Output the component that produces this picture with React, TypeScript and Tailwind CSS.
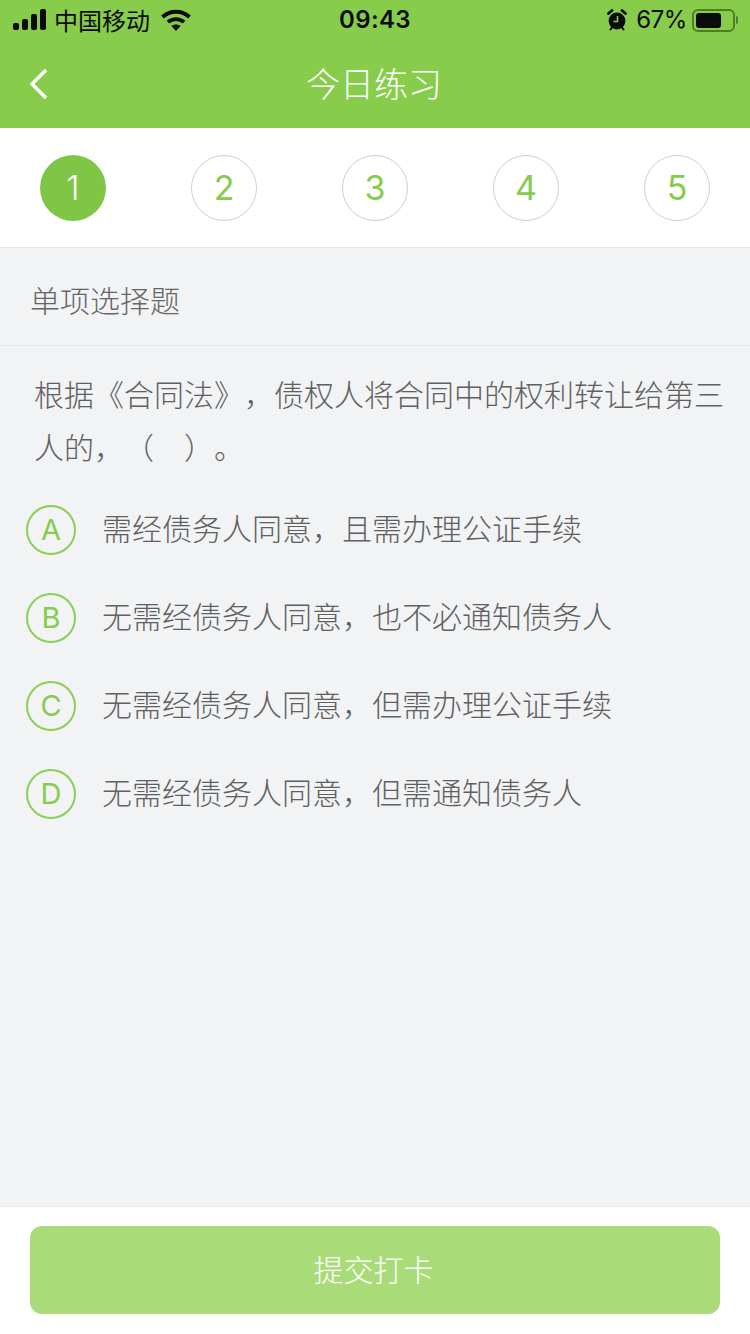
const FONT = "font-['Noto_Sans_CJK_SC','Noto_Sans',sans-serif]";

const steps = [1, 2, 3, 4, 5];

const options = [
  { key: "A", text: "需经债务人同意\uFF0C且需办理公证手续" },
  { key: "B", text: "无需经债务人同意\uFF0C也不必通知债务人" },
  { key: "C", text: "无需经债务人同意\uFF0C但需办理公证手续" },
  { key: "D", text: "无需经债务人同意\uFF0C但需通知债务人" },
];

function SignalIcon() {
  return (
    <svg width="34" height="22" viewBox="0 0 34 22" fill="#0b0b0b">
      <rect x="0" y="14" width="6" height="7" rx="2" />
      <rect x="9" y="10" width="6" height="11" rx="2" />
      <rect x="18" y="5" width="6" height="16" rx="2" />
      <rect x="27" y="0" width="6" height="21" rx="2" />
    </svg>
  );
}

function WifiIcon() {
  return (
    <svg width="30" height="22" viewBox="0 0 30 22" fill="none" stroke="#0b0b0b" strokeWidth="3.8">
      <path d="M1.5 8 C9 1 21 1 28.5 8" />
      <path d="M7 13.2 C11.5 9 18.5 9 23 13.2" />
      <path d="M15 22 L10.4 17 C13 15 17 15 19.6 17 Z" fill="#0b0b0b" stroke="none" />
    </svg>
  );
}

function AlarmIcon() {
  return (
    <svg width="20" height="22" viewBox="0 0 20 22">
      <circle cx="10" cy="12" r="8.4" fill="#0b0b0b" />
      <path d="M1.5 4.5 L5 1.5 M18.5 4.5 L15 1.5" stroke="#0b0b0b" strokeWidth="2.8" strokeLinecap="round" />
      <path d="M3.5 20.5 L5 18.5 M16.5 20.5 L15 18.5" stroke="#0b0b0b" strokeWidth="2" strokeLinecap="round" />
      <path d="M10.5 7 V12.5 H6.5" fill="none" stroke="#87cd4b" strokeWidth="1.5" />
    </svg>
  );
}

function BatteryIcon() {
  return (
    <div className="flex items-center gap-[1px]">
      <div className="h-[23px] w-[43px] rounded-[6px] border-2 border-[#4f7d2c] p-[2px]">
        <div className="h-full w-[25px] rounded-[3px] bg-[#0b0b0b]" />
      </div>
      <div className="h-[8px] w-[2px] rounded-r-sm bg-[#4f7d2c]" />
    </div>
  );
}

function StatusBar() {
  return (
    <div className="relative flex h-[40px] items-center justify-between pl-[13px] pr-[12px] text-[#0b0b0b]">
      <div className="flex items-center gap-[8px]">
        <SignalIcon />
        <span className="-ml-[1px] text-[24px] leading-none">中国移动</span>
        <div className="ml-[3px]">
          <WifiIcon />
        </div>
      </div>
      <span className="pointer-events-none absolute left-0 right-0 text-center font-['Inter',sans-serif] text-[24px] font-semibold tracking-[0.4px]">
        09:43
      </span>
      <div className="flex items-center">
        <AlarmIcon />
        <span className="ml-[9px] mr-[5px] font-['Inter',sans-serif] text-[24px] tracking-[-0.4px]">67%</span>
        <BatteryIcon />
      </div>
    </div>
  );
}

export default function App() {
  return (
    <div className={`${FONT} flex h-[1334px] w-[750px] flex-col overflow-hidden bg-[#f1f3f5] [text-spacing-trim:space-all]`}>
      <header className="h-[128px] bg-[#87cd4b]">
        <StatusBar />
        <div className="relative flex h-[88px] items-center justify-center pb-[4px] pr-[2px]">
          <svg className="absolute left-[29px] top-[28px]" width="20" height="32" viewBox="0 0 20 32" fill="none" stroke="#fff" strokeWidth="3.4">
            <path d="M17 2 L3 16 L17 30" />
          </svg>
          <h1 className="text-[34px] font-light text-white">今日练习</h1>
        </div>
      </header>

      <div className="flex h-[120px] items-center justify-between border-b border-[#e6e6e6] bg-white px-[40px]">
        {steps.map((n) =>
          n === 1 ? (
            <div key={n} className="flex size-[66px] items-center justify-center rounded-full bg-[#7fc646] font-['Inter',sans-serif] text-[34px] font-light text-white">
              {n}
            </div>
          ) : (
            <div key={n} className="flex size-[66px] items-center justify-center rounded-full border border-[#cfcfcf] font-['Inter',sans-serif] text-[34px] text-[#86cb4e]">
              {n}
            </div>
          ),
        )}
      </div>

      <div className="flex h-[98px] items-center border-b border-[#e4e6e8] pl-[30px] pt-[6px] text-[30px] font-light text-[#666]">
        单项选择题
      </div>

      <main className="flex-1 pt-[21px]">
        <p className="pl-[34px] pr-[20px] text-[30px] font-light leading-[53px] text-[#606060]">
          {"根据《合同法》\uFF0C债权人将合同中的权利转让给第三人的\uFF0C\uFF08\u3000\uFF09\u3002"}
        </p>
        <ul className="mt-[32px] flex flex-col gap-[38px] pl-[26px]">
          {options.map((o) => (
            <li key={o.key} className="flex items-center gap-[26px]">
              <div className="flex size-[50px] items-center justify-center rounded-full border-2 border-[#8ccf55] font-['Inter',sans-serif] text-[29px] text-[#86cb4e]">
                {o.key}
              </div>
              <span className="mb-[6px] text-[30px] font-light leading-none text-[#606060]">{o.text}</span>
            </li>
          ))}
        </ul>
      </main>

      <footer className="h-[128px] border-t border-[#e6e8ea] bg-white px-[30px] pt-[19px]">
        <button className="h-[88px] w-full rounded-[12px] bg-[#a9dc78] pb-[4px] pr-[3px] text-[30px] font-light text-white">
          提交打卡
        </button>
      </footer>
    </div>
  );
}
